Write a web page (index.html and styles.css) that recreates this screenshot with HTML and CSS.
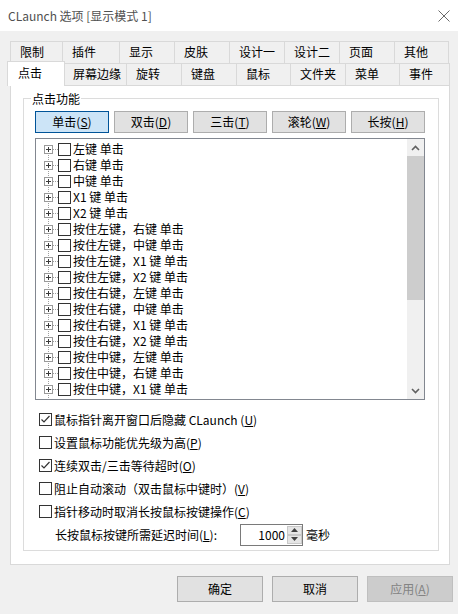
FILE: index.html
```html
<!DOCTYPE html>
<html lang="zh-CN">
  <head>
    <meta charset="UTF-8" />
    <title>CLaunch 选项 [显示模式 1]</title>
    <link rel="stylesheet" href="styles.css">
  </head>
  <body>
    <!-- Title bar -->
    <div class="titlebar">
      <span class="title">CLaunch 选项 [显示模式 1]</span>
      <svg class="close" width="12" height="12" viewBox="0 0 12 12">
        <path d="M0.5,0.5 L11.5,11.5 M11.5,0.5 L0.5,11.5" stroke="#6a6a6a" stroke-width="1" fill="none" />
      </svg>
    </div>

    <!-- Tabs -->
    <div class="tabs">
      <div class="tab-row back">
        <div class="tab">限制</div>
        <div class="tab">插件</div>
        <div class="tab">显示</div>
        <div class="tab">皮肤</div>
        <div class="tab">设计一</div>
        <div class="tab">设计二</div>
        <div class="tab">页面</div>
        <div class="tab">其他</div>
      </div>
      <div class="tab-row front">
        <div class="tab active">点击</div>
        <div class="tab">屏幕边缘</div>
        <div class="tab">旋转</div>
        <div class="tab">键盘</div>
        <div class="tab">鼠标</div>
        <div class="tab">文件夹</div>
        <div class="tab">菜单</div>
        <div class="tab">事件</div>
      </div>
    </div>

    <!-- Tab page -->
    <div class="panel">
      <div class="group">
        <span class="group-title">点击功能</span>

        <div class="mode-buttons">
          <button class="btn selected">单击(<u>S</u>)</button>
          <button class="btn">双击(<u>D</u>)</button>
          <button class="btn">三击(<u>T</u>)</button>
          <button class="btn">滚轮(<u>W</u>)</button>
          <button class="btn">长按(<u>H</u>)</button>
        </div>

        <div class="tree">
          <ul class="tree-items">
            <li><span class="exp"></span><span class="conn"></span><span class="cb"></span>左键 单击</li>
            <li><span class="exp"></span><span class="conn"></span><span class="cb"></span>右键 单击</li>
            <li><span class="exp"></span><span class="conn"></span><span class="cb"></span>中键 单击</li>
            <li><span class="exp"></span><span class="conn"></span><span class="cb"></span>X1 键 单击</li>
            <li><span class="exp"></span><span class="conn"></span><span class="cb"></span>X2 键 单击</li>
            <li><span class="exp"></span><span class="conn"></span><span class="cb"></span>按住左键，右键 单击</li>
            <li><span class="exp"></span><span class="conn"></span><span class="cb"></span>按住左键，中键 单击</li>
            <li><span class="exp"></span><span class="conn"></span><span class="cb"></span>按住左键，X1 键 单击</li>
            <li><span class="exp"></span><span class="conn"></span><span class="cb"></span>按住左键，X2 键 单击</li>
            <li><span class="exp"></span><span class="conn"></span><span class="cb"></span>按住右键，左键 单击</li>
            <li><span class="exp"></span><span class="conn"></span><span class="cb"></span>按住右键，中键 单击</li>
            <li><span class="exp"></span><span class="conn"></span><span class="cb"></span>按住右键，X1 键 单击</li>
            <li><span class="exp"></span><span class="conn"></span><span class="cb"></span>按住右键，X2 键 单击</li>
            <li><span class="exp"></span><span class="conn"></span><span class="cb"></span>按住中键，左键 单击</li>
            <li><span class="exp"></span><span class="conn"></span><span class="cb"></span>按住中键，右键 单击</li>
            <li><span class="exp"></span><span class="conn"></span><span class="cb"></span>按住中键，X1 键 单击</li>
          </ul>
          <div class="scrollbar">
            <div class="sb-btn">
              <svg width="9" height="6" viewBox="0 0 9 6"><path d="M1,5 L4.5,1.5 L8,5" stroke="#606060" stroke-width="1.6" fill="none" /></svg>
            </div>
            <div class="sb-thumb"></div>
            <div class="sb-track"></div>
            <div class="sb-btn">
              <svg width="9" height="6" viewBox="0 0 9 6"><path d="M1,1 L4.5,4.5 L8,1" stroke="#606060" stroke-width="1.6" fill="none" /></svg>
            </div>
          </div>
        </div>

        <div class="options">
          <label class="opt">
            <span class="cb"><svg width="11" height="11" viewBox="0 0 11 11"><path d="M1.5,5.5 L4,8 L9.5,2" stroke="#333" stroke-width="1.2" fill="none" /></svg></span>
            鼠标指针离开窗口后隐藏 CLaunch (<u>U</u>)
          </label>
          <label class="opt"><span class="cb"></span>设置鼠标功能优先级为高(<u>P</u>)</label>
          <label class="opt">
            <span class="cb"><svg width="11" height="11" viewBox="0 0 11 11"><path d="M1.5,5.5 L4,8 L9.5,2" stroke="#333" stroke-width="1.2" fill="none" /></svg></span>
            连续双击/三击等待超时(<u>O</u>)
          </label>
          <label class="opt"><span class="cb"></span>阻止自动滚动（双击鼠标中键时）(<u>V</u>)</label>
          <label class="opt"><span class="cb"></span>指针移动时取消长按鼠标按键操作(<u>C</u>)</label>

          <div class="delay">
            <span class="delay-label">长按鼠标按键所需延迟时间(<u>L</u>):</span>
            <div class="spin">
              <span class="spin-value">1000</span>
              <span class="spin-arrows">
                <span class="spin-btn"><svg width="7" height="4" viewBox="0 0 7 4"><path d="M0,4 L3.5,0 L7,4 Z" fill="#404040" /></svg></span>
                <span class="spin-btn"><svg width="7" height="4" viewBox="0 0 7 4"><path d="M0,0 L3.5,4 L7,0 Z" fill="#404040" /></svg></span>
              </span>
            </div>
            <span class="unit">毫秒</span>
          </div>
        </div>
      </div>
    </div>

    <!-- Dialog buttons -->
    <div class="dialog-buttons">
      <button class="btn">确定</button>
      <button class="btn">取消</button>
      <button class="btn disabled">应用(<u>A</u>)</button>
    </div>
  </body>
</html>
```

FILE: styles.css
```css
* {
  margin: 0;
  padding: 0;
  box-sizing: border-box;
}

body {
  width: 458px;
  height: 614px;
  overflow: hidden;
  background: #f0f0f0;
  font-family: "Noto Sans CJK SC", "Microsoft YaHei", sans-serif;
  font-size: 12px;
  line-height: 16px;
  color: #000;
}

u {
  text-decoration: underline;
  text-underline-offset: 1px;
}

/* Title bar */
.titlebar {
  height: 31px;
  background: #fff;
  display: flex;
  align-items: center;
  justify-content: space-between;
  padding: 0 8px 0 8px;
}

.title {
  color: #505050;
}

.close {
  display: block;
  margin-top: 1px;
}

/* Tabs */
.tabs {
  padding-top: 10px;
}

.tab-row {
  display: grid;
  height: 22px;
  margin-left: 10px;
}

.tab-row.back {
  grid-template-columns: 53px 57px 55px 55px 55px 55px 55px 54px;
}

.tab-row.front {
  grid-template-columns: 54px 63px 55px 55px 54px 55px 54px 50px;
}

.tab {
  border-top: 1px solid #d9d9d9;
  border-right: 1px solid #d9d9d9;
  padding-left: 9px;
  line-height: 20px;
  background: #f0f0f0;
}

.tab:first-child {
  border-left: 1px solid #d9d9d9;
}

.tab.active {
  position: relative;
  z-index: 1;
  margin: -2px -1px -1px -3px;
  padding-left: 10px;
  padding-top: 1px;
  background: #fff;
  border: 1px solid #d9d9d9;
  border-bottom: none;
}

/* Tab page */
.panel {
  margin: 0 8px 0 10px;
  height: 480px;
  background: #fff;
  border: 1px solid #d9d9d9;
  padding-top: 12px;
}

.group {
  position: relative;
  margin: 0 10px 0 12px;
  border: 1px solid #dcdcdc;
  padding: 12px 13px 4px 11px;
}

.group-title {
  position: absolute;
  top: -8px;
  left: 7px;
  padding: 0 1px;
  background: #fff;
}

.btn {
  font-family: inherit;
  font-size: 12px;
  line-height: 16px;
  color: #000;
  background: #e1e1e1;
  border: 1px solid #adadad;
}

.mode-buttons {
  display: grid;
  grid-template-columns: repeat(5, 1fr);
  gap: 5px;
  height: 22px;
}

.mode-buttons .btn.selected {
  background: #cce4f7;
  border-color: #005499;
}

/* Tree view */
.tree {
  display: flex;
  height: 262px;
  margin-top: 5px;
  border: 1px solid #828790;
}

.tree-items {
  flex: 1;
  list-style: none;
  overflow: hidden;
  padding-top: 2px;
  background-image: repeating-linear-gradient(to bottom, #a0a0a0 0 1px, transparent 1px 2px);
  background-size: 1px 100%;
  background-position: 12px 6px;
  background-repeat: no-repeat;
}

.tree-items li {
  display: flex;
  align-items: center;
  height: 16px;
  white-space: nowrap;
}

.exp {
  position: relative;
  width: 9px;
  height: 9px;
  margin-left: 8px;
  border: 1px solid #9a9a9a;
  background: #fff;
  flex: none;
}

.exp::before,
.exp::after {
  content: "";
  position: absolute;
  background: #3a3a3a;
}

.exp::before {
  left: 1px;
  top: 3px;
  width: 5px;
  height: 1px;
}

.exp::after {
  left: 3px;
  top: 1px;
  width: 1px;
  height: 5px;
}

.conn {
  width: 5px;
  height: 1px;
  flex: none;
  background: repeating-linear-gradient(to right, #a0a0a0 0 1px, transparent 1px 2px);
}

.cb {
  display: flex;
  align-items: center;
  justify-content: center;
  width: 13px;
  height: 13px;
  flex: none;
  margin-right: 2px;
  border: 1px solid #333;
  background: #fff;
}

.scrollbar {
  width: 17px;
  display: flex;
  flex-direction: column;
  background: #f0f0f0;
}

.sb-btn {
  height: 17px;
  display: flex;
  align-items: center;
  justify-content: center;
}

.sb-thumb {
  height: 144px;
  background: #cdcdcd;
}

.sb-track {
  flex: 1;
}

/* Options */
.options {
  margin-top: 8px;
}

.opt {
  display: flex;
  align-items: center;
  height: 23px;
  padding-left: 4px;
}

.delay {
  display: flex;
  align-items: center;
  height: 23px;
  padding-left: 20px;
}

.delay-label {
  width: 185px;
}

.spin {
  display: flex;
  width: 63px;
  height: 22px;
  border: 1px solid #7a7a7a;
  background: #fff;
}

.spin-value {
  width: 46px;
  text-align: right;
  padding-right: 2px;
  line-height: 20px;
}

.spin-arrows {
  display: flex;
  flex-direction: column;
  width: 15px;
  padding: 1px 0;
}

.spin-btn {
  flex: 1;
  display: flex;
  align-items: center;
  justify-content: center;
  background: #e5e5e5;
  border: 1px solid #c8c8c8;
}

.unit {
  margin-left: 3px;
}

/* Dialog buttons */
.dialog-buttons {
  display: flex;
  justify-content: flex-end;
  gap: 9px;
  margin-top: 11px;
  padding-right: 5px;
}

.dialog-buttons .btn {
  width: 86px;
  height: 26px;
}

.dialog-buttons .btn.disabled {
  background: #cccccc;
  border-color: #bfbfbf;
  color: #838383;
}
```
